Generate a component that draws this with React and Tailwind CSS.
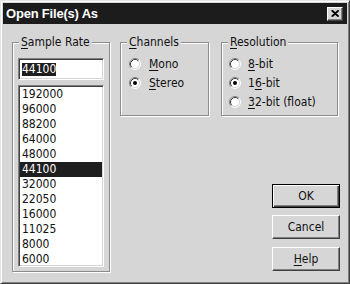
import React from "react";

function Radio({ checked }) {
  return (
    <svg width="12" height="12" viewBox="0 0 12 12" className="shrink-0">
      <circle cx="6" cy="6" r="5" fill="#ffffff" />
      <path d="M2.11 9.89 A5.5 5.5 0 0 1 9.89 2.11" fill="none" stroke="#808080" strokeWidth="1" />
      <path d="M9.89 2.11 A5.5 5.5 0 0 1 2.11 9.89" fill="none" stroke="#ffffff" strokeWidth="1" />
      <path d="M2.82 9.18 A4.5 4.5 0 0 1 9.18 2.82" fill="none" stroke="#404040" strokeWidth="1" />
      <path d="M9.18 2.82 A4.5 4.5 0 0 1 2.82 9.18" fill="none" stroke="#d6d6d6" strokeWidth="1" />
      {checked && <circle cx="6" cy="6" r="2" fill="#000000" />}
    </svg>
  );
}

function Group({ label, className, inner, children }) {
  return (
    <fieldset
      className={
        "border border-[#8c8c8c] shadow-[inset_1px_1px_0_#ffffff,1px_1px_0_#ffffff] " +
        className
      }
    >
      <legend className="ml-[6px] px-[2px] leading-[14px] bg-[#d6d6d6]">{label}</legend>
      <div className={inner}>{children}</div>
    </fieldset>
  );
}

function RadioRow({ checked, children, gap }) {
  return (
    <div className={"flex items-center h-[19px] " + gap}>
      <Radio checked={checked} />
      <span className="leading-[14px]">{children}</span>
    </div>
  );
}

function Button({ children, isDefault, className }) {
  return (
    <div
      className={
        "w-[68px] h-[24px] flex items-center justify-center bg-[#d6d6d6] " +
        (isDefault
          ? "border border-black shadow-[inset_1px_1px_0_#ffffff,inset_-1px_-1px_0_#404040,inset_-2px_-2px_0_#808080] "
          : "border border-t-white border-l-white border-r-[#404040] border-b-[#404040] shadow-[inset_-1px_-1px_0_#808080] ") +
        (className || "")
      }
    >
      <span className="leading-[14px]">{children}</span>
    </div>
  );
}

const rates = [
  "192000",
  "96000",
  "88200",
  "64000",
  "48000",
  "44100",
  "32000",
  "22050",
  "16000",
  "11025",
  "8000",
  "6000",
];

export default function App() {
  return (
    <div className="w-[350px] h-[284px] bg-[#d6d6d6] p-[2px] border border-t-[#e4e4e4] border-l-[#e4e4e4] border-r-[#404040] border-b-[#404040] shadow-[inset_1px_1px_0_#ffffff,inset_-1px_-1px_0_#808080] font-['DejaVu_Sans_Condensed',sans-serif] text-[12px] text-[#111] overflow-hidden">
      {/* Title bar */}
      <div className="h-[21px] bg-[#1c1c1c] flex items-center justify-between pl-[3px] pr-[4px]">
        <span className="font-['Liberation_Sans',sans-serif] font-bold text-[13px] text-white leading-[16px] tracking-[-0.2px]">
          Open File(s) As
        </span>
        <div className="w-[16px] h-[14px] bg-[#d6d6d6] border border-t-white border-l-white border-r-[#404040] border-b-[#404040] shadow-[inset_-1px_-1px_0_#808080] flex items-center justify-center">
          <svg width="8" height="7" viewBox="0 0 8 7">
            <path d="M0.5 0.5 L7 6.5 M1.5 0.5 L8 6.5 M7 0.5 L0.5 6.5 M8 0.5 L1.5 6.5" stroke="#000" strokeWidth="1.1" />
          </svg>
        </div>
      </div>

      {/* Body */}
      <div className="flex pl-[9px] mt-[11px]">
        <Group
          label={
            <span>
              <u className="underline-offset-2">S</u>ample Rate
            </span>
          }
          className="w-[98px] h-[237px]"
          inner="px-[5px]"
        >
          <div className="mt-[9px] h-[22px] bg-white border border-t-[#808080] border-l-[#808080] border-r-white border-b-white shadow-[inset_1px_1px_0_#404040,inset_-1px_-1px_0_#d6d6d6] pl-[3px] flex items-center">
            <span className="bg-[#1e1e1e] text-white leading-[13px] h-[13px]">44100</span>
          </div>
          <div className="mt-[5px] h-[182px] bg-white border border-t-[#808080] border-l-[#808080] border-r-white border-b-white shadow-[inset_1px_1px_0_#404040,inset_-1px_-1px_0_#d6d6d6] p-[1px]">
            {rates.map((r) => (
              <div
                key={r}
                className={
                  "h-[15px] leading-[15px] pl-[2px] " +
                  (r === "44100" ? "bg-[#1e1e1e] text-white" : "")
                }
              >
                {r}
              </div>
            ))}
          </div>
        </Group>

        <div className="ml-[10px] w-[220px] flex flex-col">
          <div className="flex">
            <Group
              label={
                <span>
                  <u className="underline-offset-2">C</u>hannels
                </span>
              }
              className="w-[89px] h-[81px]"
              inner="pl-[8px] pt-[5px]"
            >
              <RadioRow gap="gap-[8px]">
                <span>
                  <u className="underline-offset-2">M</u>ono
                </span>
              </RadioRow>
              <RadioRow checked gap="gap-[8px]">
                <span>
                  <u className="underline-offset-2">S</u>tereo
                </span>
              </RadioRow>
            </Group>
            <Group
              label={
                <span>
                  <u className="underline-offset-2">R</u>esolution
                </span>
              }
              className="ml-[12px] w-[117px] h-[81px]"
              inner="pl-[7px] pt-[5px]"
            >
              <RadioRow gap="gap-[7px]">
                <span>
                  <u className="underline-offset-2">8</u>-bit
                </span>
              </RadioRow>
              <RadioRow checked gap="gap-[7px]">
                <span>
                  1<u className="underline-offset-2">6</u>-bit
                </span>
              </RadioRow>
              <RadioRow gap="gap-[7px]">
                <span>
                  <u className="underline-offset-2">3</u>2-bit (float)
                </span>
              </RadioRow>
            </Group>
          </div>

          <div className="flex flex-col items-end mt-[68px]">
            <Button isDefault>OK</Button>
            <Button className="mt-[7px]">Cancel</Button>
            <Button className="mt-[8px]">
              <span>
                <u className="underline-offset-2">H</u>elp
              </span>
            </Button>
          </div>
        </div>
      </div>
    </div>
  );
}
